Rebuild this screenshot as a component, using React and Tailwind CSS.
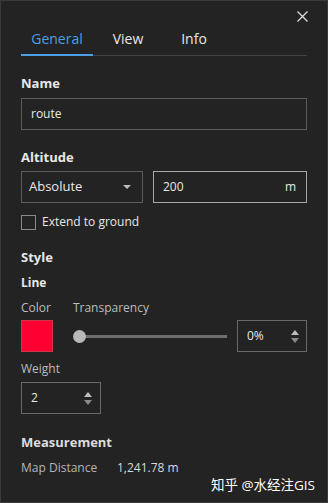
import React from 'react';

function Spinner() {
  return (
    <div className="flex flex-col items-center gap-[3px]">
      <svg width="8" height="5" viewBox="0 0 8 5"><path d="M0 5 L4 0 L8 5 Z" fill="#bdbdbd" /></svg>
      <svg width="8" height="5" viewBox="0 0 8 5"><path d="M0 0 L4 5 L8 0 Z" fill="#8a8a8a" /></svg>
    </div>
  );
}

export default function App() {
  return (
    <div
      className="w-[328px] h-[503px] bg-[#232323] border border-[#3a3a3a] text-[#e8e8e8] relative overflow-hidden"
      style={{ fontFamily: '"Open Sans", "Noto Sans CJK SC", sans-serif' }}
    >
      {/* close */}
      <div className="flex justify-end pt-[10px] pr-[19px] h-[21px]">
        <svg width="11" height="11" viewBox="0 0 11 11">
          <path d="M0.5 0.5 L10.5 10.5 M10.5 0.5 L0.5 10.5" stroke="#dcdcdc" strokeWidth="1.3" />
        </svg>
      </div>

      <div className="px-[20px]">
        {/* tabs */}
        <div className="flex border-b border-[#444] mt-[7px] text-[14px] leading-[19px]">
          <div className="w-[72px] text-center pb-[6px] text-[#4a9fe6] border-b-2 border-[#4a9fe6] -mb-px">General</div>
          <div className="w-[70px] text-center pb-[7px]">View</div>
          <div className="w-[62px] text-center pb-[7px]">Info</div>
        </div>

        <div className="mt-[18px] font-bold text-[13px] leading-[18px]">Name</div>
        <div className="mt-[6px] h-[32px] border border-[#5c5c5c] flex items-center px-[9px] text-[12px]">route</div>

        <div className="mt-[18px] font-bold text-[13px] leading-[18px]">Altitude</div>
        <div className="mt-[5px] flex gap-[10px]">
          <div className="w-[122px] h-[32px] border border-[#5c5c5c] flex items-center justify-between pl-[7px] pr-[11px] text-[13px]">
            <span>Absolute</span>
            <svg width="8" height="4" viewBox="0 0 8 4"><path d="M0 0 L4 4 L8 0 Z" fill="#bdbdbd" /></svg>
          </div>
          <div className="flex-1 h-[32px] border border-[#a8a8a8] flex items-center justify-between pl-[9px] pr-[10px] text-[12px]">
            <span>200</span>
            <span>m</span>
          </div>
        </div>
        <div className="mt-[11px] h-[16px] flex items-center gap-[6px] text-[12px]">
          <div className="w-[15px] h-[15px] border border-[#8a8a8a]" />
          <span>Extend to ground</span>
        </div>

        <div className="mt-[18px] font-bold text-[13px] leading-[18px]">Style</div>
        <div className="mt-[9px] font-bold text-[12px] leading-[16px]">Line</div>
        <div className="mt-[8px] flex gap-[22px] text-[12px] leading-[18px] text-[#bdbdbd]">
          <span>Color</span>
          <span>Transparency</span>
        </div>
        <div className="mt-[3px] flex items-center">
          <div className="w-[32px] h-[32px] bg-[#ff0033] border border-[#d0354c]" />
          <div className="ml-[26px] w-[148px] h-[3px] bg-[#6e6e6e] relative">
            <div className="absolute -left-[6px] -top-[5px] w-[13px] h-[13px] rounded-full bg-[#b8b8b8]" />
          </div>
          <div className="ml-[10px] flex-1 h-[32px] border border-[#6a6a6a] flex items-center justify-between pl-[9px] pr-[7px] text-[12px]">
            <span>0%</span>
            <Spinner />
          </div>
        </div>

        <div className="mt-[8px] text-[12px] leading-[18px] text-[#bdbdbd]">Weight</div>
        <div className="mt-[4px] w-[80px] h-[32px] border border-[#6a6a6a] flex items-center justify-between pl-[9px] pr-[8px] text-[12px]">
          <span>2</span>
          <Spinner />
        </div>

        <div className="mt-[19px] font-bold text-[13px] leading-[18px] text-[#dcdcdc]">Measurement</div>
        <div className="mt-[9px] flex text-[12px] leading-[16px] text-[#b5b5b5]">
          <span className="w-[96px]">Map Distance</span>
          <span className="text-[#d8d8d8]">1,241.78 m</span>
        </div>
      </div>

      <div className="absolute right-[12px] bottom-[7px] text-[13.5px] text-white">知乎 @水经注GIS</div>
    </div>
  );
}
